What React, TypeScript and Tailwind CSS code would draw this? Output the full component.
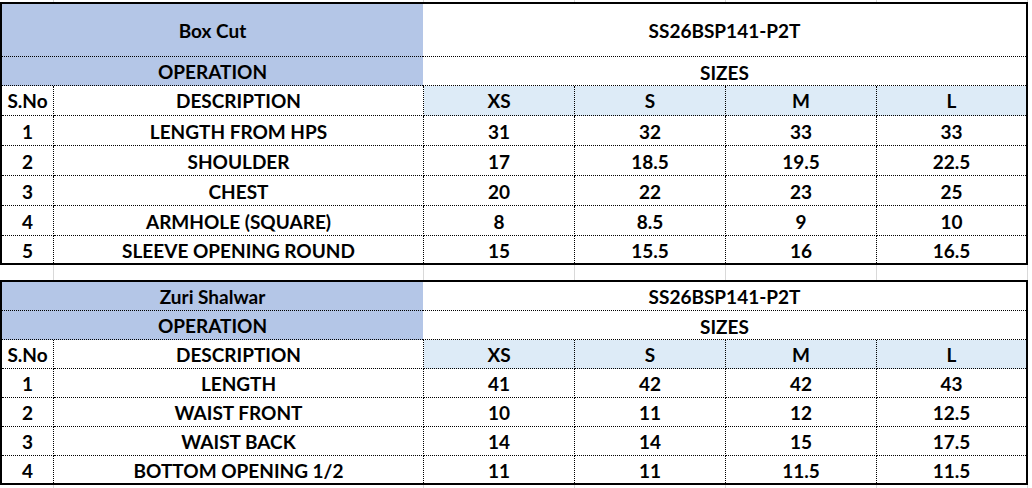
import React from "react"

type Row = [string, string, string, string, string, string]

interface SheetProps {
  title: string
  code: string
  rows: Row[]
  tall: boolean
}

const boxCut: Row[] = [
  ["1", "LENGTH FROM HPS", "31", "32", "33", "33"],
  ["2", "SHOULDER", "17", "18.5", "19.5", "22.5"],
  ["3", "CHEST", "20", "22", "23", "25"],
  ["4", "ARMHOLE (SQUARE)", "8", "8.5", "9", "10"],
  ["5", "SLEEVE OPENING ROUND", "15", "15.5", "16", "16.5"],
]

const shalwar: Row[] = [
  ["1", "LENGTH", "41", "42", "42", "43"],
  ["2", "WAIST FRONT", "10", "11", "12", "12.5"],
  ["3", "WAIST BACK", "14", "14", "15", "17.5"],
  ["4", "BOTTOM OPENING 1/2", "11", "11", "11.5", "11.5"],
]

const cell = "flex items-center justify-center border-b border-r border-dotted border-black"

function Sheet({ title, code, rows, tall }: SheetProps) {
  return (
    <div className="w-[1028px] border-2 border-black">
      {/* Title + code */}
      <div className={`flex ${tall ? "h-[53px]" : "h-[29px]"}`}>
        <div className="flex w-[421px] items-center justify-center border-b border-dotted border-black bg-[#b4c6e7] pt-px">
          {title}
        </div>
        <div className="flex flex-1 items-center justify-center border-b border-dotted border-black pt-px">
          {code}
        </div>
      </div>

      {/* Operation / sizes */}
      <div className="flex h-[29px]">
        <div className="flex w-[421px] items-center justify-center border-b border-dotted border-black bg-[#b4c6e7]">
          OPERATION
        </div>
        <div className="flex flex-1 items-center justify-center border-b border-dotted border-black pt-[3px]">
          SIZES
        </div>
      </div>

      {/* Column heads */}
      <div className={`grid grid-cols-[52px_370px_151px_151px_151px_149px] ${tall ? "h-[30px]" : "h-[29px]"}`}>
        <div className={cell}>S.No</div>
        <div className={cell}>DESCRIPTION</div>
        <div className={`${cell} bg-[#ddebf7]`}>XS</div>
        <div className={`${cell} bg-[#ddebf7]`}>S</div>
        <div className={`${cell} bg-[#ddebf7]`}>M</div>
        <div className="flex items-center justify-center border-b border-dotted border-black bg-[#ddebf7]">L</div>
      </div>

      {rows.map((r, i) => {
        const last = i === rows.length - 1
        const h = last ? "h-[27px]" : tall ? "h-[30px]" : "h-[29px]"
        const bb = last ? "border-b-0" : ""
        return (
          <div key={r[0]} className={`grid grid-cols-[52px_370px_151px_151px_151px_149px] ${h}`}>
            {r.map((v, j) => (
              <div
                key={j}
                className={`${cell} ${bb} ${j === 5 ? "border-r-0" : ""} pt-px`}
              >
                {v}
              </div>
            ))}
          </div>
        )
      })}
    </div>
  )
}

function GridStrip({ h }: { h: string }) {
  return (
    <div className={`grid grid-cols-[54px_370px_151px_151px_151px_151px_4px] ${h}`}>
      <div className="border-r border-[#d9d9d9]" />
      <div className="border-r border-[#d9d9d9]" />
      <div className="border-r border-[#d9d9d9]" />
      <div className="border-r border-[#d9d9d9]" />
      <div className="border-r border-[#d9d9d9]" />
      <div className="border-r border-[#d9d9d9]" />
      <div />
    </div>
  )
}

export default function App() {
  return (
    <div
      className="h-[488px] w-[1032px] overflow-hidden bg-white text-[19px] font-bold leading-none text-black"
      style={{ fontFamily: "Lato, 'Open Sans', sans-serif" }}
    >
      <GridStrip h="h-[2px]" />
      <Sheet title="Box Cut" code="SS26BSP141-P2T" rows={boxCut} tall />
      <GridStrip h="h-[15px]" />
      <Sheet title="Zuri Shalwar" code="SS26BSP141-P2T" rows={shalwar} tall={false} />
      <GridStrip h="h-[3px]" />
    </div>
  )
}
